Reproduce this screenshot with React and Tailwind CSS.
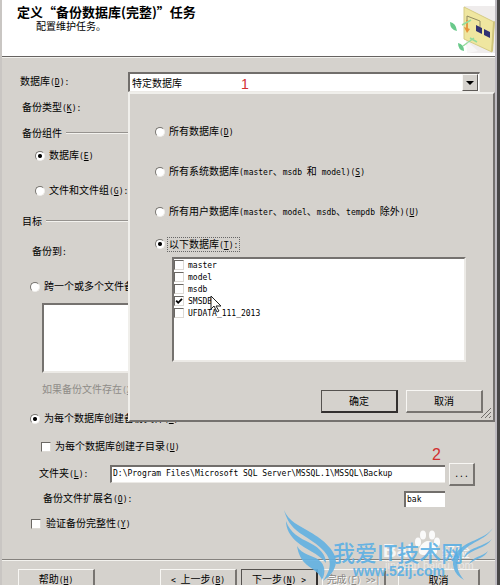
import React from 'react';

const databases = [
  { name: 'master', checked: false },
  { name: 'model', checked: false },
  { name: 'msdb', checked: false },
  { name: 'SMSDB', checked: true },
  { name: 'UFDATA_111_2013', checked: false },
];

const scopes = [
  { id: 'all', text: '所有数据库(&D)' },
  { id: 'system', text: '所有系统数据库(master、msdb 和 model)(&S)' },
  { id: 'user', text: '所有用户数据库(master、model、msdb、tempdb 除外)(&U)' },
];

// Latin runs use the small monospace face, "&" marks the access key
const Txt = ({ text }) => (
  <span className="whitespace-pre">
    {text.split(/([\x20-\x7e]+)/).map((part, i) => {
      if (i % 2 === 0) return part;
      const at = part.indexOf('&');
      return (
        <span key={i} className="font-['DejaVu_Sans_Mono',monospace] text-[8px]">
          {at < 0 ? part : (
            <>
              {part.slice(0, at)}
              <u>{part[at + 1]}</u>
              {part.slice(at + 2)}
            </>
          )}
        </span>
      );
    })}
  </span>
);

const Radio = ({ text, name, checked, boxed }) => (
  <label className="flex items-center gap-1 shrink-0">
    <input
      type="radio"
      name={name}
      defaultChecked={checked}
      className="appearance-none size-[10px] shrink-0 rounded-full bg-white border border-t-[#77746f] border-l-[#77746f] border-r-[#efeeea] border-b-[#efeeea] checked:bg-[radial-gradient(circle,#000_0_1.5px,#fff_2.5px)]"
    />
    <span className={boxed ? '-ml-0.5 border border-dotted border-[#666] px-px leading-[11px]' : ''}>
      <Txt text={text} />
    </span>
  </label>
);

const Check = ({ text, checked, gap = 'gap-1' }) => (
  <label className={`flex items-center shrink-0 ${gap}`}>
    <span className="relative flex shrink-0">
      <input
        type="checkbox"
        defaultChecked={checked}
        className="peer appearance-none size-[10px] bg-white border border-t-[#6b6864] border-l-[#6b6864] border-r-[#dddad5] border-b-[#dddad5]"
      />
      <svg viewBox="0 0 10 10" className="absolute inset-0 size-[10px] hidden peer-checked:block" fill="none" stroke="#000" strokeWidth="1.8">
        <path d="M2.2 4.6 4.2 6.8 8 2.8" />
      </svg>
    </span>
    <Txt text={text} />
  </label>
);

const Group = ({ text }) => (
  <div className="flex items-center gap-1 pl-5 pr-4 h-5">
    <Txt text={text} />
    <div className="flex-1 border-t border-t-[#96938f] border-b border-b-[#f3f2ee]" />
  </div>
);

const Button = ({ text, className = '', width = 'w-[77px]', primary, disabled }) => (
  <button
    type="button"
    disabled={disabled}
    className={`shrink-0 h-[23px] border ${width} ${
      primary
        ? 'border-[#55524f] border-r-2 border-b-2 border-r-[#33302f] border-b-[#33302f]'
        : 'border-t-[#f8f7f4] border-l-[#f8f7f4] border-r-2 border-r-[#777470] border-b-2 border-b-[#777470]'
    } ${disabled ? 'text-[#8b8884] [text-shadow:1px_1px_#fff]' : ''} ${className}`}
  >
    <Txt text={text} />
  </button>
);

const WizardArt = () => (
  <svg viewBox="0 0 48 50" className="w-12 h-[50px]" fill="none">
    <path d="M17 1h31v47H20z" fill="#efecec" />
    <path d="M17 2 47 17 45 47 17 34z" fill="#efe6a0" stroke="#d6cc84" />
    <path d="M46 17l2-1-2 30-2 1z" fill="#cfc57b" />
    <path d="M20 22V11l13 5v6" stroke="#8f8a62" />
    <path d="M20 15v9" stroke="#e59a43" strokeWidth="2" />
    <path d="M17 22l6 2-3 4z" fill="#e8943b" />
    <path d="M29 20l6 3v6l-6-3zM37 24l6 3v6l-6-3z" fill="#303273" />
    <path d="M15 20l9-5M16 41l11-8M23 33l7 4" stroke="#93dc9c" strokeWidth="1.5" />
    <path d="M17 49l4-12 10 9z" fill="#fff" opacity=".5" />
    <path d="M3 17q6 1 7 9-7-1-7-9zM11 38q6 1 6 8-6-1-6-8z" fill="#69c98a" />
  </svg>
);

const DatabasePopup = () => (
  <div className="absolute left-[126px] right-[5px] top-[92px] h-[330px] bg-[#d5d2cd] border-l-2 border-t-2 border-[#f0efeb] border-r-2 border-b-2 border-r-[#75726f] border-b-[#75726f]">
    <div className="pl-[25px] pt-7 flex flex-col">
      {scopes.map((s) => (
        <div key={s.id} className="h-5 mb-5 flex items-center">
          <Radio name="scope" text={s.text} />
        </div>
      ))}
      <div className="h-5 -mt-2 flex items-center">
        <Radio name="scope" text="以下数据库(&T):" checked boxed />
      </div>
    </div>
    <div className="ml-[42px] mr-[27px] mt-[3px] h-[105px] bg-white border-t-2 border-l-2 border-[#75726f] border-r-2 border-b-2 border-r-[#eceae6] border-b-[#eceae6]">
      {databases.map((db) => (
        <div key={db.name} className="h-3 flex items-center">
          <Check text={db.name} checked={db.checked} />
        </div>
      ))}
    </div>
    <div className="mt-7 mr-[10px] flex justify-end gap-2">
      <Button text="确定" primary />
      <Button text="取消" />
    </div>
    <svg viewBox="0 0 10 10" className="absolute right-0.5 bottom-0.5 size-[10px]" stroke="#716e6b">
      <path d="M0 10 10 0M4 10l6-6M8 10l2-2" />
    </svg>
    <svg viewBox="0 0 12 18" className="absolute left-[80px] top-[201px] w-3 h-[18px]" fill="#fff" stroke="#222">
      <path d="M1 1v13l3-3 3 6 2-1-3-5h5z" />
    </svg>
  </div>
);

const Watermark = () => (
  <div className="absolute right-0 bottom-0 w-[220px] h-20 pointer-events-none">
    <div className="absolute left-[103px] top-[34px] leading-6 text-[19px] font-bold text-white/80 font-['Liberation_Sans',sans-serif]">Bai</div>
    <div className="absolute left-[162px] top-[36px] leading-5 text-[14px] text-white/80">经验</div>
    <div className="absolute left-[105px] top-[52px] leading-4 text-[11px] text-white/50 font-['Liberation_Sans',sans-serif]">jingyan.baidu.com</div>
    <svg viewBox="0 0 220 80" className="absolute inset-0 w-[220px] h-20">
      <g fill="#fff" opacity=".9">
        <ellipse cx="138" cy="37" rx="3" ry="4.5" />
        <ellipse cx="143" cy="30" rx="3" ry="4.5" />
        <ellipse cx="152" cy="30" rx="3" ry="4.5" />
        <ellipse cx="157" cy="37" rx="3" ry="4.5" />
        <path d="M148 36c5 0 10 7 9 11s-6 3-9 3-8 1-9-3 4-11 9-11z" />
      </g>
      <g fill="#62b1e2" opacity=".9">
        <path d="M4 5C8 16 20 21 30 27 44 35 56 46 56 57 55 66 50 71 43 76 50 66 52 58 47 50 40 39 24 32 16 25 9 19 6 12 4 5z" />
        <path d="M6 16C10 28 20 33 30 38 40 43 46 50 46 58 38 48 26 45 17 37 10 31 6 24 6 16z" />
        <path d="M17 41C22 50 32 50 39 55 45 60 46 67 42 75 39 67 33 65 27 60 21 55 18 48 17 41z" />
        <path d="M213 23C205 36 188 37 180 50 175 60 178 68 184 75 173 69 170 58 176 48 186 35 204 35 213 23z" />
        <path d="M212 34C206 44 192 43 184 53 187 42 204 42 212 34z" />
        <path d="M208 46C204 54 196 53 189 59 193 51 202 52 208 46z" />
      </g>
    </svg>
    <div className="absolute left-[53px] top-[34px] leading-6 text-[22px] font-medium whitespace-nowrap text-[#58aee4]/90">我爱IT技术网</div>
    <div className="absolute left-[73px] top-[58px] leading-4 text-[14px] font-bold text-[#58aee4]/90 font-['Liberation_Sans',sans-serif]">www.52ij.com</div>
  </div>
);

export default function App() {
  return (
    <div className="relative h-screen overflow-hidden bg-[#d5d2cd] border-l-2 border-[#c9c6c3] text-[10px] leading-4 text-black font-['Noto_Sans_CJK_SC',sans-serif]">
      <div className="h-full border-r-3 border-[#484747]">
        <div className="h-full border-r-2 border-[#bdbac0]">
          <header className="h-[57px] bg-white border-b border-[#666361] flex justify-between">
            <div className="pl-[15px] pt-1">
              <h1 className="text-[13px] leading-4 font-bold">定义“备份数据库(完整)”任务</h1>
              <p className="pl-[19px] leading-3">配置维护任务。</p>
            </div>
            <div className="pt-[5px]">
              <WizardArt />
            </div>
          </header>

          <form className="flex flex-col border-t border-[#f3f2ee] pt-[14px]">
            <div className="flex items-center h-5 pl-[18px] pr-[15px]">
              <label htmlFor="db" className="w-[108px] shrink-0"><Txt text="数据库(&D):" /></label>
              <div className="relative flex-1 h-5 bg-white border-t-2 border-l-2 border-[#716e6b] border-b border-b-[#eceae6] border-r border-r-[#eceae6]">
                <select id="db" className="appearance-none w-full h-full pl-0.5 leading-4 outline-none">
                  <option>特定数据库</option>
                </select>
                <span className="absolute right-px top-0 bottom-0 w-4 bg-[#d5d2cd] border border-t-[#f8f7f4] border-l-[#f8f7f4] border-r-[#5e5b58] border-b-[#5e5b58] flex items-center justify-center pointer-events-none">
                  <svg viewBox="0 0 8 4" className="w-2 h-1"><path d="M0 0h8L4 4z" /></svg>
                </span>
                <span className="absolute left-[111px] top-0 text-[14px] leading-5 text-[#d22f2f] font-['Liberation_Sans',sans-serif]">1</span>
              </div>
            </div>
            <div className="flex items-center h-5 mt-1.5 pl-5"><Txt text="备份类型(&K):" /></div>
            <div className="mt-[5px]"><Group text="备份组件" /></div>
            <div className="flex items-center h-5 mt-[3px] pl-[33px]"><Radio name="part" text="数据库(&E)" checked /></div>
            <div className="flex items-center h-5 mt-[15px] pl-[33px]"><Radio name="part" text="文件和文件组(&G):" /></div>
            <div className="mt-[10px]"><Group text="目标" /></div>
            <div className="flex items-center h-5 mt-[11px] pl-[30px]"><Txt text="备份到:" /></div>
            <div className="flex items-center h-5 mt-[15px] pl-7"><Radio name="target" text="跨一个或多个文件备份数据库(&S):" /></div>
            <div className="mt-1.5 ml-10 mr-[80px] h-[70px] bg-white border-t-2 border-l-2 border-[#75726f] border-b-2 border-b-[#eceae6]" />
            <div className="flex items-center h-5 mt-[7px] pl-10 text-[#8f8c88]"><Txt text="如果备份文件存在(&X):" /></div>
            <div className="flex items-center h-5 mt-[9px] pl-7"><Radio name="target" text="为每个数据库创建备份文件(&R)" checked /></div>
            <div className="flex items-center h-5 mt-2 pl-[39px]"><Check text="为每个数据库创建子目录(&U)" /></div>
            <div className="relative flex items-center h-5 mt-[7px] pl-[37px] pr-5">
              <label htmlFor="folder" className="w-[71px] shrink-0"><Txt text="文件夹(&L):" /></label>
              <input
                id="folder"
                defaultValue="D:\Program Files\Microsoft SQL Server\MSSQL.1\MSSQL\Backup"
                className="flex-1 min-w-0 h-[18px] pl-px pb-0.5 bg-white border-t-2 border-l-2 border-[#716e6b] border-b border-b-[#eceae6] text-[8px] font-['DejaVu_Sans_Mono',monospace]"
              />
              <Button text="..." width="w-[26px]" className="ml-1" />
              <span className="absolute right-[54px] -top-[19px] text-[16px] leading-5 text-[#d22f2f] font-['Liberation_Sans',sans-serif]">2</span>
            </div>
            <div className="flex items-center justify-between h-5 mt-[5px] pl-[41px] pr-[50px]">
              <label htmlFor="ext"><Txt text="备份文件扩展名(&O):" /></label>
              <input
                id="ext"
                defaultValue="bak"
                className="w-[41px] h-4 pl-px bg-white border-t-2 border-l-2 border-[#716e6b] text-[8px] font-['DejaVu_Sans_Mono',monospace]"
              />
            </div>
            <div className="flex items-center h-5 mt-[5px] pl-[29px]"><Check text="验证备份完整性(&Y)" gap="gap-[5px]" /></div>
            <div className="mt-[25px] border-t border-t-[#85827e] border-b border-b-[#f3f2ee]" />
            <div className="flex mt-2 pl-4 pr-[15px]">
              <Button text="帮助(&H)" />
              <div className="flex flex-1 justify-end gap-1">
                <Button text="< 上一步(&B)" />
                <Button text="下一步(&N) >" primary />
                <Button text="完成(&F) >>|" width="w-16" disabled />
                <Button text="取消" width="w-[82px]" className="ml-2" />
              </div>
            </div>
          </form>
        </div>
      </div>
      <DatabasePopup />
      <Watermark />
    </div>
  );
}
